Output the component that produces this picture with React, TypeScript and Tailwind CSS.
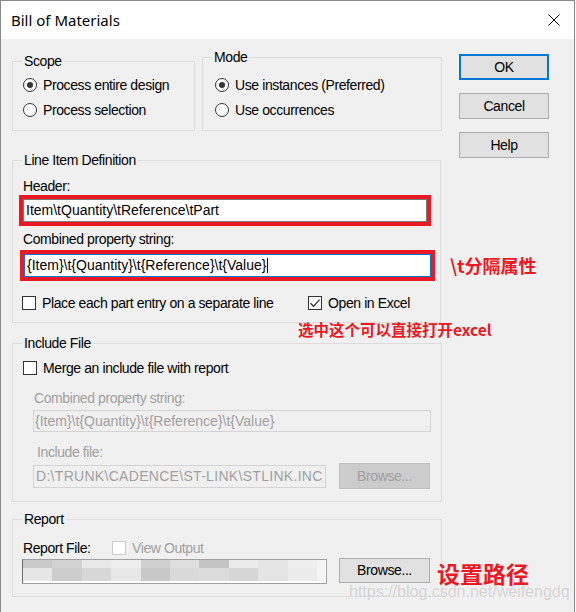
import React from "react";

const HEADER = "Item\\tQuantity\\tReference\\tPart";
const PROPS = "{Item}\\t{Quantity}\\t{Reference}\\t{Value}";
const INC = "D:\\TRUNK\\CADENCE\\ST-LINK\\STLINK.INC";

// pixelated (blurred) report path
const mosaicTop = [
  "bg-[#c9c9c9]", "bg-[#d3d3d3]", "bg-[#e9e9e9]", "bg-[#ededed]", "bg-[#cfcfcf]", "bg-[#dedede]",
  "bg-[#c4c4c4]", "bg-[#ebebeb]", "bg-[#e4e4e4]", "bg-[#eeeeee]", "bg-[#f3f3f3]",
];
const mosaicBottom = [
  "bg-[#e6e6e6]", "bg-[#cdcdcd]", "bg-[#d7d7d7]", "bg-[#e7e7e7]", "bg-[#c8c8c8]", "bg-[#d9d9d9]",
  "bg-[#dbdbdb]", "bg-[#d6d6d6]", "bg-[#e4e4e4]", "bg-[#ebebeb]", "bg-[#f4f4f4]",
];

function GroupBox({ title, className = "", children }: { title: string; className?: string; children?: React.ReactNode }) {
  return (
    <fieldset className={`min-w-0 border border-[#dcdcdc] pl-[10px] ${className}`}>
      <legend className="ml-[-1px] px-[2px] leading-[16px]">{title}</legend>
      {children}
    </fieldset>
  );
}

function Radio({ checked, label }: { checked?: boolean; label: string }) {
  return (
    <div className="flex h-[20px] items-center">
      <span className="flex h-[14px] w-[14px] items-center justify-center rounded-full border border-[#333333] bg-white">
        {checked && <span className="h-[6px] w-[6px] rounded-full bg-[#333333]" />}
      </span>
      <span className="ml-[6px]">{label}</span>
    </div>
  );
}

function Check({ checked, disabled, label }: { checked?: boolean; disabled?: boolean; label: string }) {
  return (
    <div className="flex h-[20px] items-center">
      <span
        className={`flex h-[14px] w-[14px] items-center justify-center border bg-white ${
          disabled ? "border-[#cccccc]" : "border-[#333333]"
        }`}
      >
        {checked && (
          <svg width="12" height="12" viewBox="0 0 12 12">
            <path d="M1.5 6.2 L4.6 9.3 L10.6 2.6" fill="none" stroke="#333333" strokeWidth="1.3" />
          </svg>
        )}
      </span>
      <span className={`ml-[6px] ${disabled ? "text-[#a0a0a0]" : ""}`}>{label}</span>
    </div>
  );
}

export default function App() {
  return (
    <div className="h-[612px] w-[576px] overflow-hidden bg-white font-['Liberation_Sans',Arial,sans-serif] text-[14px] tracking-[-0.4px] text-black">
      <div className="relative h-[613px] w-[575px] border-x border-t border-[#8a8a8a] bg-[#f0f0f0]">
        {/* Title bar */}
        <div className="flex h-[38px] items-center justify-between bg-white pl-[10px] pr-[14px]">
          <span className="font-['Noto_Sans',sans-serif] text-[15px] tracking-normal">Bill of Materials</span>
          <svg width="12" height="12" viewBox="0 0 12 12">
            <path d="M0.5 0.5 L11.5 11.5 M11.5 0.5 L0.5 11.5" stroke="#000" strokeWidth="1" />
          </svg>
        </div>

        <div className="flex pl-[11px]">
          {/* Left column */}
          <div className="w-[430px]">
            <div className="flex items-start">
              <GroupBox title="Scope" className="mt-[14px] h-[78px] w-[183px]">
                <div className="mt-[6px] flex flex-col gap-[5px]">
                  <Radio checked label="Process entire design" />
                  <Radio label="Process selection" />
                </div>
              </GroupBox>
              <GroupBox title="Mode" className="ml-[7px] mt-[10px] h-[82px] w-[240px]">
                <div className="ml-[2px] mt-[10px] flex flex-col gap-[5px]">
                  <Radio checked label="Use instances (Preferred)" />
                  <Radio label="Use occurrences" />
                </div>
              </GroupBox>
            </div>

            <GroupBox title="Line Item Definition" className="mt-[21px] h-[171px] w-[429px]">
              <div className="mt-[10px] leading-[16px]">Header:</div>
              <div className="mt-[5px] h-[23px] w-[404px] border border-[#7a7a7a] bg-white pl-[2px] leading-[21px] tracking-normal outline-[4px] outline-[#eb1923] outline-solid">
                {HEADER}
              </div>
              <div className="mt-[9px] leading-[16px]">Combined property string:</div>
              <div className="ml-[1px] mt-[7px] flex h-[23px] w-[407px] items-center border border-[#0078d7] bg-white pl-[2px] tracking-normal outline-[4px] outline-[#eb1923] outline-solid">
                <span>{PROPS}</span>
                <span className="ml-[1px] h-[15px] w-px bg-black" />
              </div>
              <div className="mt-[16px] flex">
                <div className="ml-[-1px] w-[286px]">
                  <Check label="Place each part entry on a separate line" />
                </div>
                <Check checked label="Open in Excel" />
              </div>
            </GroupBox>

            <GroupBox title="Include File" className="mt-[12px] h-[167px] w-[430px]">
              <div className="mt-[7px]">
                <Check label="Merge an include file with report" />
              </div>
              <div className="ml-[11px] mt-[12px] leading-[16px] text-[#a0a0a0]">Combined property string:</div>
              <div className="ml-[10px] mt-[4px] h-[22px] w-[398px] border border-[#d4d4d4] bg-[#f0f0f0] pl-[1px] leading-[20px] tracking-normal text-[#a0a0a0]">
                {PROPS}
              </div>
              <div className="ml-[14px] mt-[12px] leading-[16px] text-[#a0a0a0]">Include file:</div>
              <div className="mt-[3px] flex h-[26px] items-center">
                <div className="ml-[10px] h-[23px] w-[293px] border border-[#d4d4d4] bg-[#f0f0f0] pl-[2px] leading-[21px] tracking-[0.3px] text-[#a0a0a0]">
                  {INC}
                </div>
                <div className="ml-[13px] flex h-[26px] w-[91px] items-center justify-center border border-[#bfbfbf] bg-[#cccccc] text-[#a0a0a0]">
                  Browse...
                </div>
              </div>
            </GroupBox>

            <GroupBox title="Report" className="mt-[9px] h-[86px] w-[430px]">
              <div className="mt-[11px] flex h-[20px] items-center">
                <span className="w-[89px]">Report File:</span>
                <Check disabled label="View Output" />
              </div>
              <div className="flex items-start">
                <div className="ml-[-1px] mt-[1px] h-[25px] w-[305px] border border-[#a0a0a0] border-l-[#6e6e6e] bg-white">
                  <div className="flex h-[8px]">
                    {mosaicTop.map((c, i) => (
                      <div key={i} className={`h-full ${i === 10 ? "w-[8px]" : "w-[29.4px]"} ${c}`} />
                    ))}
                  </div>
                  <div className="flex h-[13px]">
                    {mosaicBottom.map((c, i) => (
                      <div key={i} className={`h-full ${i === 10 ? "w-[8px]" : "w-[29.4px]"} ${c}`} />
                    ))}
                  </div>
                </div>
                <div className="ml-[12px] flex h-[25px] w-[91px] items-center justify-center border border-[#adadad] bg-[#e1e1e1]">
                  Browse...
                </div>
              </div>
            </GroupBox>
          </div>

          {/* Buttons */}
          <div className="ml-[17px] mt-[15px] flex w-[90px] flex-col gap-[13px]">
            <button className="flex h-[26px] w-[90px] items-center justify-center border-2 border-[#0078d7] bg-[#e1e1e1]">OK</button>
            <button className="flex h-[26px] w-[90px] items-center justify-center border border-[#adadad] bg-[#e1e1e1]">Cancel</button>
            <button className="flex h-[26px] w-[90px] items-center justify-center border border-[#adadad] bg-[#e1e1e1]">Help</button>
          </div>
        </div>

        {/* Red annotations */}
        <div className="absolute left-[449px] top-[253px] font-['Noto_Sans_CJK_SC',sans-serif] text-[18px] font-bold leading-[22px] tracking-normal text-[#eb1923]">
          \t分隔属性
        </div>
        <div className="absolute left-[297px] top-[320px] font-['Noto_Sans_CJK_SC',sans-serif] text-[15.5px] font-bold leading-[16px] tracking-normal text-[#eb1923]">
          选中这个可以直接打开excel
        </div>
        <div className="absolute left-[436px] top-[559px] font-['Noto_Sans_CJK_SC',sans-serif] text-[23px] font-bold leading-[26px] tracking-normal text-[#eb1923]">
          设置路径
        </div>
        <div className="absolute left-[348px] top-[581px] text-[16px] leading-[20px] tracking-normal text-[#d2d2d2] [text-shadow:0_0_1px_#ffffff]">
          https://blog.csdn.net/weifengdq
        </div>
      </div>
    </div>
  );
}
